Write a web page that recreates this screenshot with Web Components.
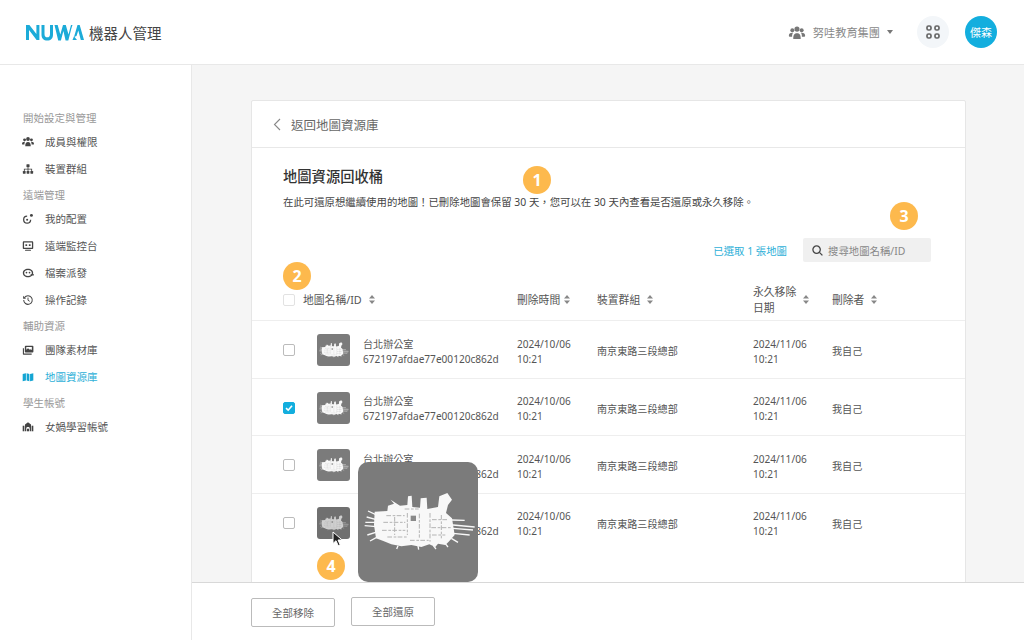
<!DOCTYPE html>
<html lang="zh-Hant">
<head>
<meta charset="utf-8">
<title>地圖資源回收桶</title>
<style>
    html, body { margin: 0; height: 100%; }
    body { font-family: "Noto Sans", "Noto Sans CJK TC", sans-serif; }
</style>
</head>
<body>
<app-shell></app-shell>

<script>
const ICONS = {
    users: '<circle cx="3" cy="4.500" r="1.700"/><circle cx="11" cy="4.500" r="1.700"/><circle cx="7" cy="3.500" r="2.200"/><path d="M0 9.500c0-2 1-2.800 3-2.800h.6c-.5.800-.8 1.700-.8 3.300H.5zM14 9.500c0-2-1-2.800-3-2.800h-.6c.5.800.8 1.700.8 3.300h2.300zM3.800 12c0-3.800 1-5 3.200-5s3.200 1.200 3.200 5z"/>',
    sitemap: '<rect x="5.200" y="1.500" width="3.600" height="3.400" rx=".5"/><rect x="1" y="9.300" width="3.200" height="3.200" rx=".5"/><rect x="5.400" y="9.300" width="3.200" height="3.200" rx=".5"/><rect x="9.800" y="9.300" width="3.200" height="3.200" rx=".5"/><path d="M6.500 4.900h1v1.800h4.300v2.600h-1V7.700H7.500v1.600h-1V7.700H3.200v1.600h-1V6.700h4.300z"/>',
    config: '<path fill-rule="evenodd" d="M6 3a4.800 4.800 0 1 0 4.800 4.800h-1.500A3.300 3.300 0 1 1 6 4.500z"/><circle cx="6" cy="7.800" r="1.200"/><circle cx="11" cy="2.800" r="1.700"/>',
    monitor: '<path fill-rule="evenodd" d="M2.200 1.500h9.600c.8 0 1.300.5 1.300 1.300v6.400c0 .8-.5 1.300-1.300 1.300H2.200c-.8 0-1.300-.5-1.300-1.300V2.800c0-.8.500-1.300 1.300-1.300zm.2 1.500v6h9.200V3z"/><rect x="4" y="5" width="2" height="2"/><rect x="8" y="5" width="2" height="2"/><rect x="3.500" y="11.300" width="7" height="1.300" rx=".6"/>',
    files: '<path fill-rule="evenodd" d="M7 2c3.500 0 6 2 6 5s-2.500 5-6 5-6-2-6-5 2.500-5 6-5zm0 1.500C4.500 3.500 2.500 5 2.500 7s2 3.500 4.500 3.500S11.500 9 11.500 7 9.500 3.500 7 3.500z"/><circle cx="5.200" cy="6.500" r="1"/><circle cx="8.800" cy="6.500" r="1"/><rect x="10" y="8.500" width="4" height="1.300"/>',
    history: '<path fill="none" stroke="currentColor" stroke-width="1.200" d="M2.900 4.200A5 5 0 1 1 2 7"/><path d="M1.300 2v3.400h3.400z"/><path fill="none" stroke="currentColor" stroke-width="1.100" d="M7 4.200V7.300l2 1.200"/>',
    media: '<path d="M1 5h1.300v6.200h9V12.500H2.200C1.500 12.500 1 12 1 11.300z"/><path fill-rule="evenodd" d="M4.300 2h8c.6 0 1 .4 1 1v6c0 .6-.4 1-1 1h-8c-.6 0-1-.4-1-1V3c0-.6.4-1 1-1zm.7 1.500v3.300l2-1.800 2.200 1.800 1-.8 1.300 1V3.500z"/>',
    map: '<path d="M.800 3.500 4.600 2.500v8.500l-3.800 1zM5.400 2.500l3.200 1v8.500l-3.200-1zM9.400 3.500l3.800-1v8.500l-3.800 1z"/>',
    student: '<path d="M7 1.500 10.500 4v8H9V8.500C9 7.500 8 7 7 7s-2 .5-2 1.500V12H3.500V4z"/><circle cx="7" cy="4.700" r="1.200"/><rect x="0.800" y="5.500" width="2" height="6.500"/><rect x="11.200" y="5.500" width="2" height="6.500"/><rect x="5.800" y="9" width="2.400" height="3"/>'
};

// 頂部列
class AppHeader extends HTMLElement {
    constructor() {
        super();
        this.attachShadow({ mode: 'open' });
        this.shadowRoot.innerHTML = `
            <style>
                :host {
                    display: flex;
                    align-items: center;
                    height: 65px;
                    box-sizing: border-box;
                    background: white;
                    border-bottom: 1px solid #e8e8e8;
                    padding: 0 27px 0 26px;
                }
                .logo { display: block; margin-right: 5px; }
                .title { font-size: 14.500px; color: #444; }
                .spacer { flex: 1; }
                .group { display: flex; align-items: center; color: #888; font-size: 11.200px; }
                .group svg.people { width: 18px; height: 14px; margin-right: 7px; fill: #777; }
                .caret {
                    width: 0; height: 0; margin: 0 24px 0 7px;
                    border-left: 3px solid transparent;
                    border-right: 3px solid transparent;
                    border-top: 4px solid #777;
                }
                .apps {
                    width: 32px; height: 32px; border-radius: 50%;
                    background: #f3f6f9;
                    display: flex; align-items: center; justify-content: center;
                    margin-right: 16px;
                }
                .avatar {
                    width: 32px; height: 32px; border-radius: 50%;
                    background: #13aede; color: white; font-size: 11px;
                    display: flex; align-items: center; justify-content: center;
                }
            </style>
            <svg class="logo" width="58" height="17" viewBox="0 0 58 17">
                <g fill="#1cabd8">
                    <path d="M0 1h3.400l7 9V1h3v15h-2.800L3 6v10H0z"/>
                    <path d="M15.500 1h3v9c0 2.500 1 3.300 2.800 3.300s2.700-.8 2.700-3.300V1h3v9.500c0 4-2.200 6-5.700 6s-5.800-2-5.800-6z"/>
                    <path d="M28.500 1h3.200l2.600 9.500L37 1h2.800l2.700 9.500L45 1h1.500l-1 3-3.200 12.500h-2.700L37.400 7l-2.500 9.500h-2.700z"/>
                    <path d="M51.500 1h2.200L58 16h-3.200l-2.500-9.500-1.800 5.500-2.500 1z"/>
                    <path d="M46.500 16l1.500-3.800 3 3.800z"/>
                </g>
            </svg>
            <span class="title">機器人管理</span>
            <span class="spacer"></span>
            <div class="group">
                <svg class="people" viewBox="0 0 14 12">${ICONS.users}</svg>
                <span>努哇教育集團</span>
                <span class="caret"></span>
            </div>
            <div class="apps">
                <svg width="14" height="14" viewBox="0 0 14 14" fill="none" stroke="#666" stroke-width="1.700">
                    <rect x="1" y="1" width="4" height="4" rx="1.500"/>
                    <rect x="9" y="1" width="4" height="4" rx="1.500"/>
                    <rect x="1" y="9" width="4" height="4" rx="1.500"/>
                    <rect x="9" y="9" width="4" height="4" rx="1.500"/>
                </svg>
            </div>
            <div class="avatar">傑森</div>
        `;
    }
}
customElements.define('app-header', AppHeader);

class NavLabel extends HTMLElement {
    constructor() {
        super();
        this.attachShadow({ mode: 'open' });
        this.shadowRoot.innerHTML = `
            <style>
                :host {
                    display: block;
                    height: 21px;
                    line-height: 21px;
                    margin-top: 2px;
                    padding-left: 23px;
                    font-size: 10.500px;
                    color: #999;
                }
            </style>
            <slot></slot>
        `;
    }
}
customElements.define('nav-label', NavLabel);

class NavItem extends HTMLElement {
    constructor() {
        super();
        this.attachShadow({ mode: 'open' });
        const icon = ICONS[this.getAttribute('icon')];
        this.shadowRoot.innerHTML = `
            <style>
                :host {
                    display: flex;
                    align-items: center;
                    height: 27px;
                    box-sizing: border-box;
                    padding: 0 0 2px 22px;
                    font-size: 10.500px;
                    color: #555;
                }
                :host([active]) { color: #2eb0d8; }
                svg { width: 12px; height: 12px; margin-right: 11px; fill: #444; color: #444; flex: none; }
                :host([active]) svg { fill: #14a5d3; color: #14a5d3; }
            </style>
            <svg viewBox="0 0 14 14">${icon}</svg>
            <slot></slot>
        `;
    }
}
customElements.define('nav-item', NavItem);

class AppSidebar extends HTMLElement {
    constructor() {
        super();
        this.attachShadow({ mode: 'open' });
        this.shadowRoot.innerHTML = `
            <style>
                :host {
                    display: block;
                    width: 192px;
                    flex: none;
                    box-sizing: border-box;
                    background: white;
                    border-right: 1px solid #e8e8e8;
                    padding-top: 41px;
                }
            </style>
            <nav-label>開始設定與管理</nav-label>
            <nav-item icon="users">成員與權限</nav-item>
            <nav-item icon="sitemap">裝置群組</nav-item>
            <nav-label>遠端管理</nav-label>
            <nav-item icon="config">我的配置</nav-item>
            <nav-item icon="monitor">遠端監控台</nav-item>
            <nav-item icon="files">檔案派發</nav-item>
            <nav-item icon="history">操作記錄</nav-item>
            <nav-label>輔助資源</nav-label>
            <nav-item icon="media">團隊素材庫</nav-item>
            <nav-item icon="map" active>地圖資源庫</nav-item>
            <nav-label>學生帳號</nav-label>
            <nav-item icon="student">女媧學習帳號</nav-item>
        `;
    }
}
customElements.define('app-sidebar', AppSidebar);

// 地圖縮圖，大小由 :host 決定
class MapImage extends HTMLElement {
    constructor() {
        super();
        this.attachShadow({ mode: 'open' });
        this.shadowRoot.innerHTML = `
            <style>
                :host {
                    display: block;
                    width: 33px;
                    height: 33px;
                    border-radius: 3px;
                    overflow: hidden;
                    background: var(--map-bg, #7b7b7b);
                }
                svg { display: block; width: 100%; height: 100%; filter: var(--map-blur, none); opacity: var(--map-fade, 1); }
            </style>
            <svg viewBox="0 -69 360 360">
                <path fill="#f8f8f8" d="M50 80 88 78 90 62 108 56 98 44 126 62 148 60 150 34 161 32 163 66 186 68 188 40 206 38 208 72 240 66 244 34 268 24 282 44 270 60 264 84 282 100 290 150 272 170 262 180 240 176 232 186 214 178 190 186 160 180 130 184 100 178 76 168 54 160 48 120Z"/>
                <g fill="none" stroke="#f8f8f8" stroke-width="4">
                    <path d="M60 92 30 78M55 104 26 96M55 112 22 112M55 125 20 122M60 140 28 150M60 155 36 168"/>
                    <path d="M280 105 320 106M285 120 350 126M285 130 345 135M285 145 335 150M280 160 300 172"/>
                    <path d="M120 182 116 192M180 182 182 194M226 182 234 192M262 176 270 186"/>
                </g>
                <g fill="none" stroke="#b4b4b4" stroke-width="3" stroke-dasharray="14 5 8 4">
                    <path d="M85 92H140M76 112H142M72 136H142M88 156H150"/>
                    <path d="M148 84V150M184 86V158M216 84V170"/>
                    <path d="M222 104H272M220 128H278M222 150H262M156 166H212"/>
                    <path d="M110 96V150M250 90V160"/>
                    <path d="M140 72H182"/>
                </g>
                <rect x="158" y="92" width="16" height="16" fill="#8a8a8a"/>
            </svg>
        `;
    }
}
customElements.define('map-image', MapImage);

class SortIcon extends HTMLElement {
    constructor() {
        super();
        this.attachShadow({ mode: 'open' });
        this.shadowRoot.innerHTML = `
            <style>
                :host { display: inline-flex; flex: none; margin-left: 7px; }
                svg { display: block; }
            </style>
            <svg width="6" height="9" viewBox="0 0 6 9" fill="#888">
                <path d="M3 0 6 3.500H0zM3 9 0 5.500H6z"/>
            </svg>
        `;
    }
}
customElements.define('sort-icon', SortIcon);

class CheckMark extends HTMLElement {
    constructor() {
        super();
        this.attachShadow({ mode: 'open' });
        this.shadowRoot.innerHTML = `
            <style>
                :host {
                    display: flex;
                    align-items: center;
                    justify-content: center;
                    width: 12px;
                    height: 12px;
                    box-sizing: border-box;
                    border: 1px solid var(--check-line, #bbb);
                    border-radius: 2px;
                    background: white;
                }
                :host([checked]) { background: #13aede; border-color: #13aede; }
                svg { display: none; }
                :host([checked]) svg { display: block; }
            </style>
            <svg width="8" height="8" viewBox="0 0 8 8" fill="none" stroke="white" stroke-width="1.600">
                <path d="M1 4.200 3.200 6.200 7 1.800"/>
            </svg>
        `;
    }
}
customElements.define('check-mark', CheckMark);

class MapRow extends HTMLElement {
    constructor() {
        super();
        this.attachShadow({ mode: 'open' });
        const checked = this.hasAttribute('checked') ? 'checked' : '';
        this.shadowRoot.innerHTML = `
            <style>
                :host {
                    display: grid;
                    grid-template-columns: 34px 46px 154px 80px 156px 79px 1fr;
                    align-items: center;
                    height: 57.500px;
                    box-sizing: border-box;
                    padding-left: 31px;
                    border-top: 1px solid #eee;
                    font-size: 10.100px;
                    line-height: 15px;
                    color: #555;
                }
                check-mark { margin-top: 2px; }
                .text { padding-top: 5px; }
                .thumb { height: 32px; margin-top: 2px; --map-blur: blur(.5px); }
                :host([hover]) .thumb { --map-bg: #707070; --map-fade: .7; }
            </style>
            <check-mark ${checked}></check-mark>
            <map-image class="thumb"></map-image>
            <div class="text">台北辦公室<br>672197afdae77e00120c862d</div>
            <div class="text">2024/10/06<br>10:21</div>
            <div class="text">南京東路三段總部</div>
            <div class="text">2024/11/06<br>10:21</div>
            <div class="text">我自己</div>
        `;
    }
}
customElements.define('map-row', MapRow);

class TableHead extends HTMLElement {
    constructor() {
        super();
        this.attachShadow({ mode: 'open' });
        this.shadowRoot.innerHTML = `
            <style>
                :host {
                    display: grid;
                    grid-template-columns: 20px 214px 80px 156px 79px 1fr;
                    align-items: center;
                    height: 41px;
                    padding-left: 31px;
                    font-size: 10.800px;
                    line-height: 16px;
                    color: #555;
                    --check-line: #e2e2e2;
                }
                .cell { display: flex; align-items: center; }
                .wrap { width: 48px; }
            </style>
            <check-mark></check-mark>
            <div class="cell">地圖名稱/ID<sort-icon></sort-icon></div>
            <div class="cell">刪除時間<sort-icon style="margin-left:4px"></sort-icon></div>
            <div class="cell">裝置群組<sort-icon></sort-icon></div>
            <div class="cell"><span class="wrap">永久移除日期</span><sort-icon style="margin-left:2px"></sort-icon></div>
            <div class="cell">刪除者<sort-icon></sort-icon></div>
        `;
    }
}
customElements.define('table-head', TableHead);

class SearchBox extends HTMLElement {
    constructor() {
        super();
        this.attachShadow({ mode: 'open' });
        this.shadowRoot.innerHTML = `
            <style>
                :host {
                    display: flex;
                    align-items: center;
                    width: 128px;
                    height: 24px;
                    box-sizing: border-box;
                    padding-left: 9px;
                    background: #f0f0f0;
                    border-radius: 2px;
                    font-size: 10.400px;
                    color: #888;
                }
                svg { margin-right: 5px; }
            </style>
            <svg width="11" height="11" viewBox="0 0 11 11" fill="none" stroke="#444" stroke-width="1.300">
                <circle cx="4.600" cy="4.600" r="3.700"/><path d="M7.400 7.400 10.400 10.400"/>
            </svg>
            <slot></slot>
        `;
    }
}
customElements.define('search-box', SearchBox);

class RecycleCard extends HTMLElement {
    constructor() {
        super();
        this.attachShadow({ mode: 'open' });
        this.shadowRoot.innerHTML = `
            <style>
                :host {
                    display: block;
                    height: 600px;
                    box-sizing: border-box;
                    background: white;
                    border: 1px solid #e6e6e6;
                    border-radius: 2px;
                }
                .back {
                    display: flex;
                    align-items: center;
                    height: 46px;
                    padding-left: 21px;
                    border-bottom: 1px solid #e8e8e8;
                    font-size: 12.500px;
                    color: #666;
                }
                .back svg { margin-right: 10px; }
                .intro { padding: 19px 34px 0 31px; height: 90px; box-sizing: border-box; }
                h2 { margin: 0; font-size: 14.300px; line-height: 20px; font-weight: 500; color: #333; }
                p { margin: 7px 0 0; font-size: 10.400px; line-height: 16px; color: #444; }
                .tools {
                    display: flex;
                    align-items: center;
                    justify-content: flex-end;
                    gap: 16px;
                    padding-right: 34px;
                    font-size: 10.400px;
                    color: #2eb0d8;
                }
            </style>
            <div class="back">
                <svg width="8" height="13" viewBox="0 0 8 13" fill="none" stroke="#888" stroke-width="1.100"><path d="M7 1 1.500 6.500 7 12"/></svg>
                返回地圖資源庫
            </div>
            <div class="intro">
                <h2>地圖資源回收桶</h2>
                <p>在此可還原想繼續使用的地圖！已刪除地圖會保留 30 天，您可以在 30 天內查看是否還原或永久移除。</p>
            </div>
            <div class="tools">
                <span>已選取 1 張地圖</span>
                <search-box>搜尋地圖名稱/ID</search-box>
            </div>
            <table-head style="margin-top:17px"></table-head>
            <map-row></map-row>
            <map-row checked></map-row>
            <map-row></map-row>
            <map-row hover></map-row>
        `;
    }
}
customElements.define('recycle-card', RecycleCard);

class FooterBar extends HTMLElement {
    constructor() {
        super();
        this.attachShadow({ mode: 'open' });
        this.shadowRoot.innerHTML = `
            <style>
                :host {
                    display: flex;
                    align-items: flex-start;
                    gap: 16px;
                    height: 58px;
                    box-sizing: border-box;
                    padding: 14px 0 0 59px;
                    background: white;
                    border-top: 1px solid #d8d8d8;
                }
                button {
                    width: 84px;
                    height: 29px;
                    padding: 0;
                    background: white;
                    border: 1px solid #bbb;
                    border-radius: 2px;
                    font: inherit;
                    font-size: 10.500px;
                    color: #666;
                }
                .first { margin-top: 1px; }
            </style>
            <button class="first">全部移除</button>
            <button>全部還原</button>
        `;
    }
}
customElements.define('footer-bar', FooterBar);

class StepBadge extends HTMLElement {
    constructor() {
        super();
        this.attachShadow({ mode: 'open' });
        this.shadowRoot.innerHTML = `
            <style>
                :host {
                    position: absolute;
                    display: flex;
                    align-items: center;
                    justify-content: center;
                    width: 28px;
                    height: 28px;
                    border-radius: 50%;
                    background: #fdb94d;
                    color: white;
                    font-size: 16px;
                    font-weight: 700;
                }
            </style>
            <slot></slot>
        `;
    }
}
customElements.define('step-badge', StepBadge);

class AppShell extends HTMLElement {
    constructor() {
        super();
        this.attachShadow({ mode: 'open' });
        this.shadowRoot.innerHTML = `
            <style>
                :host {
                    display: flex;
                    flex-direction: column;
                    position: relative;
                    width: 1024px;
                    height: 640px;
                    overflow: hidden;
                    background: #f5f5f5;
                }
                .body { flex: 1; display: flex; min-height: 0; }
                .right { flex: 1; display: flex; flex-direction: column; min-width: 0; }
                main { flex: 1; min-height: 0; overflow: hidden; padding: 35px 58px 0 59px; }
                .preview {
                    position: absolute;
                    left: 358px; top: 462px;
                    width: 120px; height: 120px;
                    border-radius: 10px;
                    --map-blur: blur(.4px);
                }
                .cursor { position: absolute; left: 332px; top: 531px; }
            </style>
            <app-header></app-header>
            <div class="body">
                <app-sidebar></app-sidebar>
                <div class="right">
                    <main><recycle-card></recycle-card></main>
                    <footer-bar></footer-bar>
                </div>
            </div>
            <map-image class="preview"></map-image>
            <svg class="cursor" width="13" height="16" viewBox="0 0 13 16">
                <path d="M1 1v11.500l3-2.800 2.200 5 2-.9-2.200-4.800h4.200z" fill="#222" stroke="white" stroke-width="1"/>
            </svg>
            <step-badge style="left:523px;top:166px">1</step-badge>
            <step-badge style="left:283px;top:262px">2</step-badge>
            <step-badge style="left:890px;top:202px">3</step-badge>
            <step-badge style="left:317px;top:552px">4</step-badge>
        `;
    }
}
customElements.define('app-shell', AppShell);
</script>
</body>
</html>
